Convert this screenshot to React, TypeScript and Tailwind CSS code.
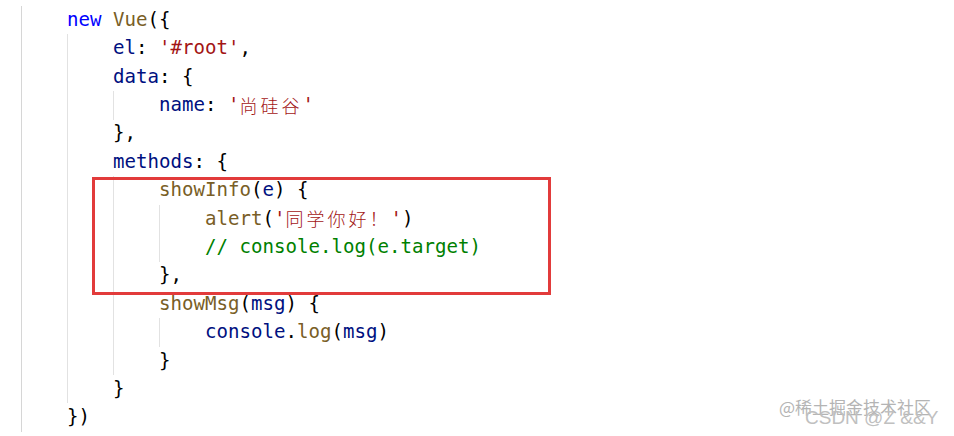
import React from "react";

type Tok = [string, string];

const KW = "text-[#0000ff]";
const FN = "text-[#795e26]";
const PR = "text-[#001080]";
const ST = "text-[#a31515]";
const CM = "text-[#008000]";
const PU = "text-[#000000]";

const lines: { indent: number; toks: Tok[] }[] = [
  { indent: 1, toks: [[KW, "new"], [PU, " "], [FN, "Vue"], [PU, "({"]] },
  { indent: 2, toks: [[PR, "el"], [PU, ": "], [ST, "'#root'"], [PU, ","]] },
  { indent: 2, toks: [[PR, "data"], [PU, ": {"]] },
  { indent: 3, toks: [[PR, "name"], [PU, ": "], [ST, "'"], ["cjk", "尚硅谷"], [ST, "'"]] },
  { indent: 2, toks: [[PU, "},"]] },
  { indent: 2, toks: [[PR, "methods"], [PU, ": {"]] },
  { indent: 3, toks: [[FN, "showInfo"], [PU, "("], [PR, "e"], [PU, ") {"]] },
  { indent: 4, toks: [[FN, "alert"], [PU, "("], [ST, "'"], ["cjk", "同学你好！"], [ST, "'"], [PU, ")"]] },
  { indent: 4, toks: [[CM, "// console.log(e.target)"]] },
  { indent: 3, toks: [[PU, "},"]] },
  { indent: 3, toks: [[FN, "showMsg"], [PU, "("], [PR, "msg"], [PU, ") {"]] },
  { indent: 4, toks: [[PR, "console"], [PU, "."], [FN, "log"], [PU, "("], [PR, "msg"], [PU, ")"]] },
  { indent: 3, toks: [[PU, "}"]] },
  { indent: 2, toks: [[PU, "}"]] },
  { indent: 1, toks: [[PU, "})"]] },
];

function Line({ indent, toks }: { indent: number; toks: Tok[] }) {
  return (
    <div className="flex h-[28.4px] items-center whitespace-pre">
      {Array.from({ length: indent }).map((_, i) => (
        <span
          key={i}
          className={
            i === 0
              ? "self-stretch w-[46px] shrink-0 border-l border-[#d6d6d6]"
              : "self-stretch w-[46px] shrink-0 border-l border-[#e2e2e2]"
          }
        />
      ))}
      {toks.map(([cls, text], i) =>
        cls === "cjk" ? (
          <span
            key={i}
            className="text-[#a31515] text-[18px] tracking-[3px] font-['Noto_Sans_CJK_SC',sans-serif] font-light"
          >
            {text}
          </span>
        ) : (
          <span key={i} className={cls}>
            {text}
          </span>
        )
      )}
    </div>
  );
}

export default function App() {
  return (
    <div className="relative w-[954px] h-[436px] overflow-hidden bg-white">
      <div className="pt-[6px] pl-[21px] font-['DejaVu_Sans_Mono','Liberation_Mono',monospace] text-[19.1px]">
        {lines.map((l, i) => (
          <Line key={i} indent={l.indent} toks={l.toks} />
        ))}
      </div>

      {/* highlight box */}
      <div className="absolute left-[92px] top-[177px] w-[459px] h-[118px] border-[3px] border-[#e23b3b]" />

      {/* watermark */}
      <div className="absolute left-[779px] top-[398px] text-[17px] text-[#b4b4b4] font-['Noto_Sans_CJK_SC',sans-serif] leading-none">
        @稀土掘金技术社区
      </div>
      <div className="absolute left-[805px] top-[408px] text-[19px] text-[#c0c0c0] font-['Liberation_Sans',sans-serif] leading-none">
        CSDN @Z &amp;&amp;Y
      </div>
    </div>
  );
}
